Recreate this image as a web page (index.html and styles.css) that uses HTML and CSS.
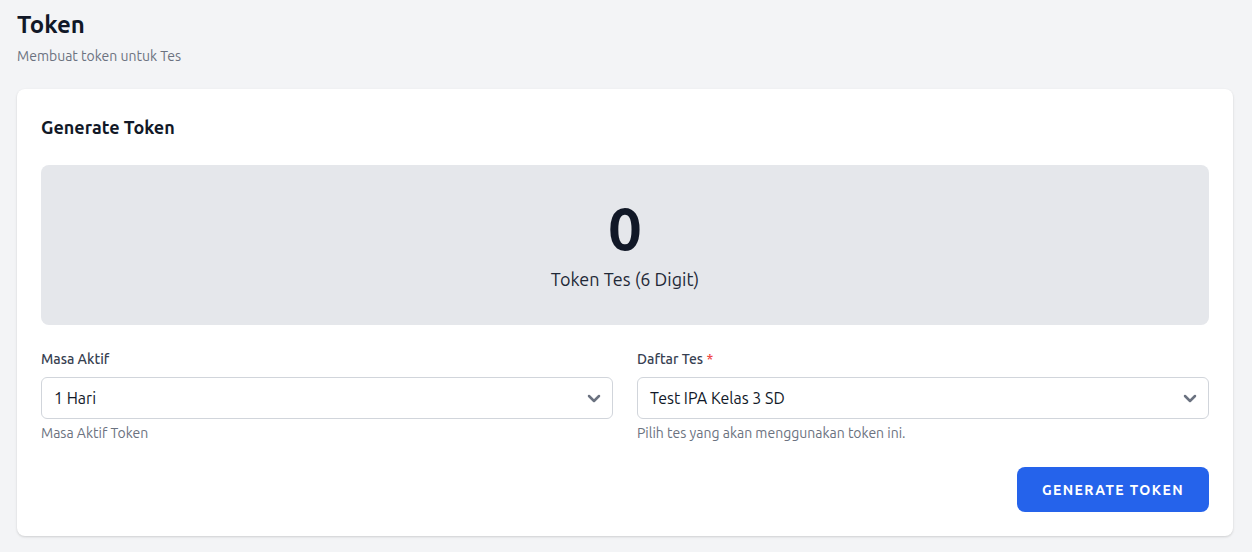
FILE: index.html
```html
<!DOCTYPE html>
<html lang="id">
<head>
<meta charset="utf-8">
<title>Token</title>
<link rel="stylesheet" href="styles.css">
</head>
<body>
<div class="page">
  <header class="page-header">
    <h1 class="page-title">Token</h1>
    <p class="page-subtitle">Membuat token untuk Tes</p>
  </header>
  <section class="card">
    <h2 class="card-title">Generate Token</h2>
    <div class="token-display">
      <div class="token-value">0</div>
      <div class="token-caption">Token Tes (6 Digit)</div>
    </div>
    <div class="form-grid">
      <div class="field">
        <label class="field-label">Masa Aktif</label>
        <div class="select">
          <span class="select-value">1 Hari</span>
          <svg class="chevron" viewBox="0 0 14 9" width="14" height="9"><path d="M2 2l5 5 5-5" fill="none" stroke="#6b7280" stroke-width="2.5" stroke-linecap="round" stroke-linejoin="round"/></svg>
        </div>
        <p class="field-help">Masa Aktif Token</p>
      </div>
      <div class="field">
        <label class="field-label">Daftar Tes <span class="required">*</span></label>
        <div class="select">
          <span class="select-value">Test IPA Kelas 3 SD</span>
          <svg class="chevron" viewBox="0 0 14 9" width="14" height="9"><path d="M2 2l5 5 5-5" fill="none" stroke="#6b7280" stroke-width="2.5" stroke-linecap="round" stroke-linejoin="round"/></svg>
        </div>
        <p class="field-help">Pilih tes yang akan menggunakan token ini.</p>
      </div>
    </div>
    <div class="actions">
      <button class="btn-primary" type="button">Generate Token</button>
    </div>
  </section>
</div>
</body>
</html>
```
FILE: styles.css
```css
* { box-sizing: border-box; }
html, body { margin: 0; padding: 0; }
body {
  background: #f3f4f6;
  font-family: "Ubuntu", "Noto Sans", "Open Sans", sans-serif;
  color: #111827;
}
.page {
  padding: 9px 19px 16px 17px;
}
.page-title {
  margin: 0;
  font-size: 24px;
  line-height: 32px;
  font-weight: 700;
  color: #111827;
}
.page-subtitle {
  margin: 5px 0 0;
  font-size: 14px;
  line-height: 20px;
  color: #6b7280;
}
.card {
  margin-top: 23px;
  background: #fff;
  border-radius: 8px;
  box-shadow: 0 1px 3px rgba(0,0,0,0.1), 0 1px 2px rgba(0,0,0,0.06);
  padding: 24px;
}
.card-title {
  margin: 0;
  font-size: 18px;
  line-height: 28px;
  font-weight: 700;
  color: #111827;
}
.token-display {
  margin-top: 24px;
  background: #e5e7eb;
  border-radius: 8px;
  height: 160px;
  padding-top: 31px;
  text-align: center;
}
.token-value {
  font-size: 60px;
  line-height: 64px;
  font-weight: 700;
  color: #111827;
}
.token-caption {
  margin-top: 5px;
  font-size: 18px;
  line-height: 28px;
  color: #1f2937;
}
.form-grid {
  margin-top: 24px;
  display: grid;
  grid-template-columns: 1fr 1fr;
  gap: 24px;
}
.field-label {
  display: block;
  font-size: 14px;
  line-height: 20px;
  font-weight: 500;
  color: #374151;
}
.required { color: #ef4444; }
.select {
  margin-top: 8px;
  height: 42px;
  border: 1px solid #d1d5db;
  border-radius: 6px;
  background: #fff;
  display: flex;
  align-items: center;
  justify-content: space-between;
  padding: 0 11px 0 12px;
}
.select-value {
  font-size: 16px;
  line-height: 24px;
  color: #111827;
}
.chevron { display: block; }
.field-help {
  margin: 4px 0 0;
  font-size: 14px;
  line-height: 20px;
  color: #6b7280;
}
.actions {
  margin-top: 24px;
  display: flex;
  justify-content: flex-end;
}
.btn-primary {
  height: 45px;
  padding: 0 25px;
  border: none;
  border-radius: 8px;
  background: #2563eb;
  color: #fff;
  font-family: inherit;
  font-size: 14px;
  font-weight: 700;
  letter-spacing: 0.1em;
  text-transform: uppercase;
  cursor: pointer;
}
```
